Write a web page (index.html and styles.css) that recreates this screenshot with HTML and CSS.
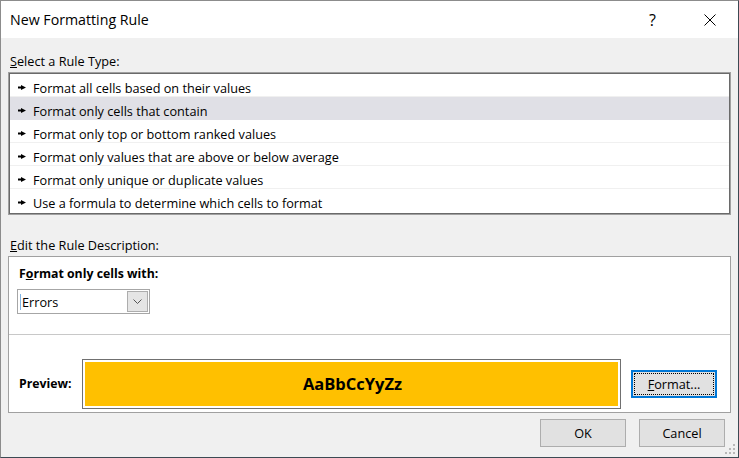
FILE: index.html
```html
<!DOCTYPE html>
<html>
<head>
<meta charset="utf-8">
<link rel="stylesheet" href="styles.css">
</head>
<body>
<div class="window">
  <div class="titlebar">
    <span class="title">New Formatting Rule</span>
    <span class="tbtn help">?</span>
    <span class="tbtn close">
      <svg width="12" height="12" viewBox="0 0 12 12"><path d="M0.5 0.5 L11.5 11.5 M11.5 0.5 L0.5 11.5" stroke="#000" stroke-width="1" fill="none"/></svg>
    </span>
  </div>
  <div class="content">
    <div class="label first"><u>S</u>elect a Rule Type:</div>
    <div class="listbox">
      <div class="row"><svg class="arr" width="8" height="5" viewBox="0 0 8 5"><path d="M0 1.5 H3 V0 L8 2.5 L3 5 V3.5 H0 Z" fill="#000"/></svg>Format all cells based on their values</div>
      <div class="row sel"><svg class="arr" width="8" height="5" viewBox="0 0 8 5"><path d="M0 1.5 H3 V0 L8 2.5 L3 5 V3.5 H0 Z" fill="#000"/></svg>Format only cells that contain</div>
      <div class="row"><svg class="arr" width="8" height="5" viewBox="0 0 8 5"><path d="M0 1.5 H3 V0 L8 2.5 L3 5 V3.5 H0 Z" fill="#000"/></svg>Format only top or bottom ranked values</div>
      <div class="row"><svg class="arr" width="8" height="5" viewBox="0 0 8 5"><path d="M0 1.5 H3 V0 L8 2.5 L3 5 V3.5 H0 Z" fill="#000"/></svg>Format only values that are above or below average</div>
      <div class="row"><svg class="arr" width="8" height="5" viewBox="0 0 8 5"><path d="M0 1.5 H3 V0 L8 2.5 L3 5 V3.5 H0 Z" fill="#000"/></svg>Format only unique or duplicate values</div>
      <div class="row last"><svg class="arr" width="8" height="5" viewBox="0 0 8 5"><path d="M0 1.5 H3 V0 L8 2.5 L3 5 V3.5 H0 Z" fill="#000"/></svg>Use a formula to determine which cells to format</div>
    </div>
    <div class="label second"><u>E</u>dit the Rule Description:</div>
    <div class="panel">
      <div class="section top">
        <div class="bold heading">F<u>o</u>rmat only cells with:</div>
        <div class="combo">
          <span class="caret"></span>
          <span class="combo-text">Errors</span>
          <span class="combo-btn">
            <svg width="9" height="5" viewBox="0 0 9 5"><path d="M0.5 0.5 L4.5 4.5 L8.5 0.5" stroke="#555" stroke-width="1" fill="none"/></svg>
          </span>
        </div>
      </div>
      <div class="section preview-row">
        <div class="bold preview-label">Preview:</div>
        <div class="preview-box"><div class="preview-fill">AaBbCcYyZz</div></div>
        <div class="btn focus"><span class="focus-ring"><u>F</u>ormat...</span></div>
      </div>
    </div>
    <div class="buttons">
      <div class="btn">OK</div>
      <div class="btn">Cancel</div>
    </div>
  </div>
  <svg class="grip" width="12" height="12" viewBox="0 0 12 12" fill="#b8b8b8">
    <rect x="8" y="0" width="2" height="2"/>
    <rect x="4" y="4" width="2" height="2"/><rect x="8" y="4" width="2" height="2"/>
    <rect x="0" y="8" width="2" height="2"/><rect x="4" y="8" width="2" height="2"/><rect x="8" y="8" width="2" height="2"/>
  </svg>
</div>
</body>
</html>
```

FILE: styles.css
```css
html, body {
  margin: 0;
  padding: 0;
}
body {
  font-family: "Open Sans", "Noto Sans", "Liberation Sans", sans-serif;
  font-size: 12.7px;
  color: #000;
  background: #f0f0f0;
}
.window {
  position: relative;
  width: 739px;
  height: 458px;
  box-sizing: border-box;
  border: 1px solid;
  border-color: #8c8c8c #3c4a53 #3c4a53 #8c8c8c;
  background: #f0f0f0;
  display: flex;
  flex-direction: column;
}
.titlebar {
  height: 37px;
  flex: none;
  background: #fff;
  display: flex;
  align-items: center;
}
.title {
  flex: 1;
  padding-left: 9px;
  font-size: 14.2px;
  line-height: 20px;
}
.tbtn {
  width: 57px;
  height: 37px;
  display: flex;
  align-items: center;
  justify-content: center;
}
.help {
  font-size: 16px;
}
.content {
  flex: 1;
  padding: 0 7px;
  display: flex;
  flex-direction: column;
}
.label {
  line-height: 16px;
  height: 16px;
  padding-left: 2px;
}
.label.first {
  margin-top: 15px;
}
.label.second {
  margin-top: 22px;
}
.listbox {
  margin-top: 3px;
  height: 143px;
  box-sizing: border-box;
  border: 1px solid #a0a0a0;
  box-shadow: inset 0 0 0 1px #6a6a6a;
  background: #fff;
  padding: 1px;
}
.row {
  height: 23px;
  box-sizing: border-box;
  border-bottom: 1px solid #f0f0f0;
  display: flex;
  align-items: center;
  padding: 5px 0 0 8px;
  white-space: nowrap;
}
.row.last {
  border-bottom-color: #fff;
}
.row.sel {
  background: #e0e0e6;
  border-bottom-color: #e0e0e6;
}
.arr {
  margin-right: 7px;
  flex: none;
}
.panel {
  margin-top: 3px;
  height: 157px;
  box-sizing: border-box;
  border: 1px solid #a0a0a0;
  background: #fff;
  display: flex;
  flex-direction: column;
}
.section.top {
  height: 78px;
  box-sizing: border-box;
  padding: 9px 0 0 8px;
  border-bottom: 1px solid #c8c8c8;
}
.bold {
  font-weight: 700;
  font-size: 12.3px;
}
.heading {
  line-height: 16px;
  margin-left: 2px;
}
.combo {
  margin-top: 7px;
  width: 133px;
  height: 25px;
  box-sizing: border-box;
  border: 1px solid #a6a6a6;
  padding: 1px;
  display: flex;
  align-items: center;
}
.caret {
  width: 1px;
  height: 16px;
  background: #7fb4e6;
  margin-left: 1px;
}
.combo-text {
  flex: 1;
  padding-left: 1px;
}
.combo-btn {
  width: 21px;
  height: 21px;
  box-sizing: border-box;
  border: 1px solid #adadad;
  background: #e5e5e5;
  display: flex;
  align-items: center;
  justify-content: center;
}
.preview-row {
  flex: 1;
  display: flex;
  align-items: center;
  padding: 20px 13px 0 10px;
  box-sizing: border-box;
}
.preview-label {
  width: 63px;
  flex: none;
}
.preview-box {
  width: 539px;
  height: 50px;
  box-sizing: border-box;
  border: 1px solid #707070;
  padding: 2px;
  background: #fff;
  flex: none;
}
.preview-fill {
  height: 100%;
  background: #ffc000;
  display: flex;
  align-items: center;
  justify-content: center;
  font-weight: 700;
  font-size: 16.5px;
  padding-left: 2px;
  box-sizing: border-box;
}
.btn {
  width: 86px;
  height: 28px;
  box-sizing: border-box;
  border: 1px solid #adadad;
  background: #e1e1e1;
  display: flex;
  align-items: center;
  justify-content: center;
  flex: none;
}
.preview-row .btn {
  margin-left: 10px;
}
.btn.focus {
  border: 2px solid #0078d7;
  padding: 1px;
}
.focus-ring {
  width: 100%;
  height: 100%;
  box-sizing: border-box;
  border: 1px dotted #000;
  display: flex;
  align-items: center;
  justify-content: center;
}
.buttons {
  margin-top: 6px;
  display: flex;
  justify-content: flex-end;
  gap: 13px;
  padding-right: 6px;
}
.grip {
  position: absolute;
  right: 1px;
  bottom: 1px;
}
```
